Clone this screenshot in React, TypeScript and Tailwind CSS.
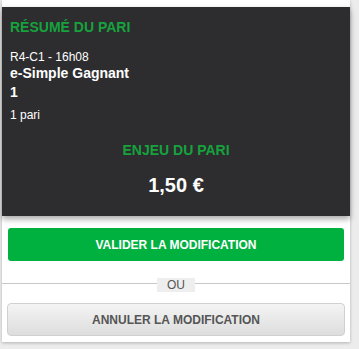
export default function App() {
  return (
    <div className="min-h-[349px] bg-[#ececec] font-['Liberation_Sans',Arial,sans-serif]">
      <div className="ml-[2px] w-[348px] bg-white pt-[7px] pb-[6px] shadow-[0_1px_3px_rgba(0,0,0,0.25)]">
        {/* résumé */}
        <div className="relative bg-[#2d2d2f] pl-2 pr-2 pt-3 pb-[19px] shadow-[0_3px_6px_rgba(0,0,0,0.35)]">
          <h2 className="text-[14px] leading-[16px] font-bold text-[#16a23d]">RÉSUMÉ DU PARI</h2>
          <p className="mt-[15px] text-[12px] leading-[14px] text-white">R4-C1 - 16h08</p>
          <p className="text-[14px] leading-[18px] font-bold text-white">e-Simple Gagnant</p>
          <p className="mt-px text-[14px] leading-[18px] font-bold text-white">1</p>
          <p className="mt-[6px] text-[12px] leading-[16px] text-white">1 pari</p>
          <p className="mt-[19px] text-center text-[14px] leading-[16px] font-bold text-[#16a23d]">ENJEU DU PARI</p>
          <p className="mt-[15px] text-center text-[20px] leading-[24px] font-bold text-white">1,50 €</p>
        </div>

        <button className="mx-[6px] mt-3 flex h-[33px] w-[336px] items-center justify-center rounded-[3px] bg-[#00b140] text-[12px] font-bold text-white">
          VALIDER LA MODIFICATION
        </button>

        <div className="mt-[17px] flex items-start">
          <div className="mt-[5px] h-px flex-1 bg-[#c8c8c8]" />
          <span className="bg-[#eeeeee] px-[10px] text-[12px] leading-[14px] text-[#555]">OU</span>
          <div className="mt-[5px] h-px flex-1 bg-[#c8c8c8]" />
        </div>

        <button className="mx-[5px] mt-[11px] flex h-[33px] w-[338px] items-center justify-center rounded-[4px] border border-[#d0d0d0] bg-gradient-to-b from-[#f4f4f4] to-[#dddddd] text-[12px] font-bold text-[#555]">
          ANNULER LA MODIFICATION
        </button>
      </div>
    </div>
  );
}
